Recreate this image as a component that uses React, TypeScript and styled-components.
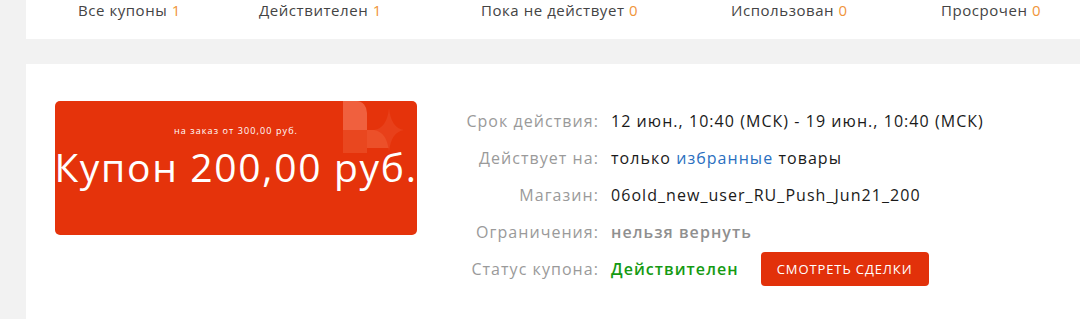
import React from "react";
import styled, {createGlobalStyle} from "styled-components";

const GlobalStyle = createGlobalStyle`
  html, body {
    margin: 0;
    padding: 0;
    background: #f2f2f2;
    font-family: "Open Sans", "Liberation Sans", sans-serif;
  }
`;

const Page = styled.div`
  padding-left: 26px;
  display: flex;
  flex-direction: column;
  gap: 25px;
`;

const TabsBar = styled.div`
  background: #fff;
  height: 39px;
  display: flex;
  align-items: flex-start;
  padding-left: 52px;
`;

const Tab = styled.div<{$width?: number}>`
  width: ${(p) => (p.$width ? `${p.$width}px` : "auto")};
  flex-shrink: 0;
  font-size: 15px;
  line-height: 20px;
  letter-spacing: 0.55px;
  color: #444;
  white-space: nowrap;
`;

const Count = styled.span`
  color: #f0953a;
`;

const CouponPanel = styled.div`
  background: #fff;
  height: 260px;
  padding: 37px 0 0 29px;
  display: flex;
  align-items: flex-start;
  gap: 38px;
`;

const CouponCard = styled.div`
  position: relative;
  width: 362px;
  height: 134px;
  flex-shrink: 0;
  border-radius: 5px;
  background: #e5330b;
  color: #fff;
  overflow: hidden;
  display: flex;
  flex-direction: column;
  align-items: center;
`;

const Decor = styled.svg`
  position: absolute;
  top: 0;
  left: 0;
`;

const MinOrder = styled.div`
  position: relative;
  margin-top: 24px;
  font-size: 9px;
  line-height: 12px;
  letter-spacing: 1.1px;
`;

const Amount = styled.div`
  position: relative;
  margin-top: 7px;
  font-size: 39px;
  line-height: 46px;
  letter-spacing: 1.7px;
  white-space: nowrap;
`;

const Details = styled.div`
  margin-top: 1px;
  display: grid;
  grid-template-columns: 144px auto;
  column-gap: 12px;
  grid-auto-rows: 37px;
  align-items: center;
  font-size: 16px;
  letter-spacing: 1.05px;
`;

const Label = styled.div`
  justify-self: end;
  color: #9a9a9a;
  white-space: nowrap;
`;

const Value = styled.div<{$tone?: "muted" | "ok"}>`
  display: flex;
  align-items: center;
  gap: 22px;
  white-space: nowrap;
  color: ${(p) => (p.$tone === "muted" ? "#8f8f8f" : p.$tone === "ok" ? "#159a12" : "#1a1a1a")};
  font-weight: ${(p) => (p.$tone ? 600 : 400)};
`;

const Link = styled.a`
  color: #2a6fc0;
  text-decoration: none;
`;

const DealsButton = styled.button`
  height: 34px;
  width: 168px;
  border: none;
  border-radius: 4px;
  background: #e2310a;
  color: #fff;
  font-family: "Open Sans", "Liberation Sans", sans-serif;
  font-size: 13px;
  font-weight: 400;
  text-transform: uppercase;
  letter-spacing: 0.9px;
  cursor: pointer;
`;

const tabs = [
  {label: "Все купоны", count: 1, width: 181},
  {label: "Действителен", count: 1, width: 222},
  {label: "Пока не действует", count: 0, width: 250},
  {label: "Использован", count: 0, width: 210},
  {label: "Просрочен", count: 0},
];

const App: React.FC = () => {
  return (
    <>
      <GlobalStyle />
      <Page>
        <TabsBar>
          {tabs.map((t) => (
            <Tab key={t.label} $width={t.width}>
              {t.label} <Count>{t.count}</Count>
            </Tab>
          ))}
        </TabsBar>
        <CouponPanel>
          <CouponCard>
            <Decor width="362" height="134" viewBox="0 0 362 134">
              <path d="M288 0 H302 A10 12 0 0 1 312 12 V29 H288 Z" fill="#f0603e" />
              <path d="M288 29 H312 V52 H288 Z" fill="#e9471f" />
              <path d="M312 29 H334 V47 H312 Z" fill="#ec5029" />
              <path d="M334 7 Q336 27 349 29 Q336 31 334 51 Q332 31 319 29 Q332 27 334 7 Z" fill="#e8401a" />
            </Decor>
            <MinOrder>на заказ от 300,00 руб.</MinOrder>
            <Amount>Купон 200,00 руб.</Amount>
          </CouponCard>
          <Details>
            <Label>Срок действия:</Label>
            <Value>12 июн., 10:40 (МСК) - 19 июн., 10:40 (МСК)</Value>
            <Label>Действует на:</Label>
            <Value>
              <span>
                только <Link href="#">избранные</Link> товары
              </span>
            </Value>
            <Label>Магазин:</Label>
            <Value>06old_new_user_RU_Push_Jun21_200</Value>
            <Label>Ограничения:</Label>
            <Value $tone="muted">нельзя вернуть</Value>
            <Label>Статус купона:</Label>
            <Value $tone="ok">
              Действителен
              <DealsButton>Смотреть сделки</DealsButton>
            </Value>
          </Details>
        </CouponPanel>
      </Page>
    </>
  );
};

export default App;
